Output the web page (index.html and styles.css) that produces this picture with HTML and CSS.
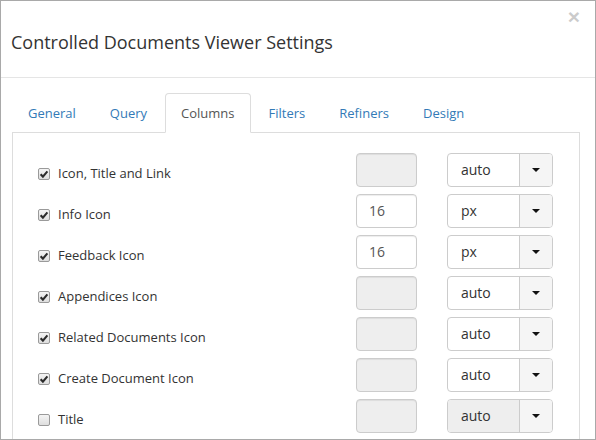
FILE: index.html
```html
<!DOCTYPE html>
<html>
<head>
<meta charset="utf-8">
<link rel="stylesheet" href="styles.css">
</head>
<body>
<div class="modal">
  <div class="modal-header">
    <h4 class="modal-title">Controlled Documents Viewer Settings</h4>
    <button class="close" type="button">×</button>
  </div>
  <div class="modal-body">
    <ul class="nav-tabs">
      <li class="tab"><a>General</a></li>
      <li class="tab"><a>Query</a></li>
      <li class="tab active"><a>Columns</a></li>
      <li class="tab"><a>Filters</a></li>
      <li class="tab"><a>Refiners</a></li>
      <li class="tab"><a>Design</a></li>
    </ul>
    <div class="tab-content">
      <div class="grid">
        <label class="check-label"><span class="cb on"><svg viewBox="0 0 12 12" width="12" height="12"><path d="M2.6 6.3 L4.9 8.6 L9.4 3.4" fill="none" stroke="#2b2b2b" stroke-width="2.1"/></svg></span>Icon, Title and Link</label>
        <div class="input disabled"></div>
        <div class="select"><span class="sel-text">auto</span><span class="sel-btn"><span class="caret"></span></span></div>

        <label class="check-label"><span class="cb on"><svg viewBox="0 0 12 12" width="12" height="12"><path d="M2.6 6.3 L4.9 8.6 L9.4 3.4" fill="none" stroke="#2b2b2b" stroke-width="2.1"/></svg></span>Info Icon</label>
        <div class="input">16</div>
        <div class="select"><span class="sel-text">px</span><span class="sel-btn"><span class="caret"></span></span></div>

        <label class="check-label"><span class="cb on"><svg viewBox="0 0 12 12" width="12" height="12"><path d="M2.6 6.3 L4.9 8.6 L9.4 3.4" fill="none" stroke="#2b2b2b" stroke-width="2.1"/></svg></span>Feedback Icon</label>
        <div class="input">16</div>
        <div class="select"><span class="sel-text">px</span><span class="sel-btn"><span class="caret"></span></span></div>

        <label class="check-label"><span class="cb on"><svg viewBox="0 0 12 12" width="12" height="12"><path d="M2.6 6.3 L4.9 8.6 L9.4 3.4" fill="none" stroke="#2b2b2b" stroke-width="2.1"/></svg></span>Appendices Icon</label>
        <div class="input disabled"></div>
        <div class="select"><span class="sel-text">auto</span><span class="sel-btn"><span class="caret"></span></span></div>

        <label class="check-label"><span class="cb on"><svg viewBox="0 0 12 12" width="12" height="12"><path d="M2.6 6.3 L4.9 8.6 L9.4 3.4" fill="none" stroke="#2b2b2b" stroke-width="2.1"/></svg></span>Related Documents Icon</label>
        <div class="input disabled"></div>
        <div class="select"><span class="sel-text">auto</span><span class="sel-btn"><span class="caret"></span></span></div>

        <label class="check-label"><span class="cb on"><svg viewBox="0 0 12 12" width="12" height="12"><path d="M2.6 6.3 L4.9 8.6 L9.4 3.4" fill="none" stroke="#2b2b2b" stroke-width="2.1"/></svg></span>Create Document Icon</label>
        <div class="input disabled"></div>
        <div class="select"><span class="sel-text">auto</span><span class="sel-btn"><span class="caret"></span></span></div>

        <label class="check-label"><span class="cb"></span>Title</label>
        <div class="input disabled"></div>
        <div class="select disabled"><span class="sel-text">auto</span><span class="sel-btn"><span class="caret"></span></span></div>
      </div>
    </div>
  </div>
</div>
</body>
</html>
```

FILE: styles.css
```css
html, body {
  margin: 0;
  padding: 0;
  background: #fff;
}
body {
  font-family: "Open Sans", "Liberation Sans", sans-serif;
  font-size: 13px;
  color: #333;
}
.modal {
  position: relative;
  width: 596px;
  height: 440px;
  box-sizing: border-box;
  border: 1px solid #a9a9a9;
  overflow: hidden;
  background: #fff;
}
.modal-header {
  height: 77px;
  box-sizing: border-box;
  border-bottom: 1px solid #e5e5e5;
  padding: 30px 10px 0;
}
.modal-title {
  margin: 0;
  font-size: 18px;
  font-weight: 400;
  line-height: 22px;
  color: #333;
}
.close {
  position: absolute;
  top: 4px;
  right: 15px;
  border: 0;
  background: transparent;
  padding: 0;
  font-family: "Liberation Sans", sans-serif;
  font-size: 21px;
  font-weight: 700;
  line-height: 24px;
  color: #000;
  opacity: 0.2;
}
.modal-body {
  padding: 15px 15px 0 11px;
}
.nav-tabs {
  list-style: none;
  margin: 0;
  padding: 0;
  display: flex;
  border-bottom: 1px solid #ddd;
}
.tab {
  margin-right: 2px;
  margin-bottom: -1px;
}
.tab a {
  display: block;
  padding: 10px 15px;
  line-height: 18px;
  color: #337ab7;
  border: 1px solid transparent;
  border-radius: 4px 4px 0 0;
}
.tab.active a {
  color: #555;
  background: #fff;
  border-color: #ddd #ddd transparent;
}
.tab-content {
  border: 1px solid #ddd;
  border-top: 0;
  height: 320px;
}
.grid {
  display: grid;
  grid-template-columns: 1fr 61px 106px;
  grid-auto-rows: 34px;
  column-gap: 30px;
  row-gap: 7px;
  padding: 20px 26px 0 25px;
}
.check-label {
  display: flex;
  align-items: center;
  gap: 8px;
  box-sizing: border-box;
  padding-top: 6px;
  color: #333;
}
.cb {
  width: 12px;
  height: 12px;
  box-sizing: border-box;
  border: 1px solid #9a9a9a;
  border-radius: 2px;
  background: linear-gradient(#f4f4f4, #dedede);
  margin-top: 1px;
  display: flex;
  align-items: center;
  justify-content: center;
  flex: none;
}
.cb svg {
  display: block;
  margin: -1px;
}
.input {
  box-sizing: border-box;
  height: 34px;
  border: 1px solid #ccc;
  border-radius: 4px;
  padding: 0 12px;
  line-height: 32px;
  font-size: 14px;
  color: #555;
  background: #fff;
  box-shadow: inset 0 1px 1px rgba(0,0,0,0.075);
}
.input.disabled {
  background: #eee;
}
.select {
  display: flex;
  height: 34px;
  box-sizing: border-box;
  border: 1px solid #ccc;
  border-radius: 4px;
  overflow: hidden;
  background: #fff;
}
.sel-text {
  flex: 1;
  padding: 0 13px;
  line-height: 32px;
  font-size: 14px;
  color: #333;
}
.select.disabled .sel-text {
  background: #eee;
}
.sel-btn {
  width: 32px;
  border-left: 1px solid #ccc;
  background: #f5f5f5;
  display: flex;
  align-items: center;
  justify-content: center;
}
.caret {
  width: 0;
  height: 0;
  border-top: 4px solid #111;
  border-left: 4px solid transparent;
  border-right: 4px solid transparent;
}
```
